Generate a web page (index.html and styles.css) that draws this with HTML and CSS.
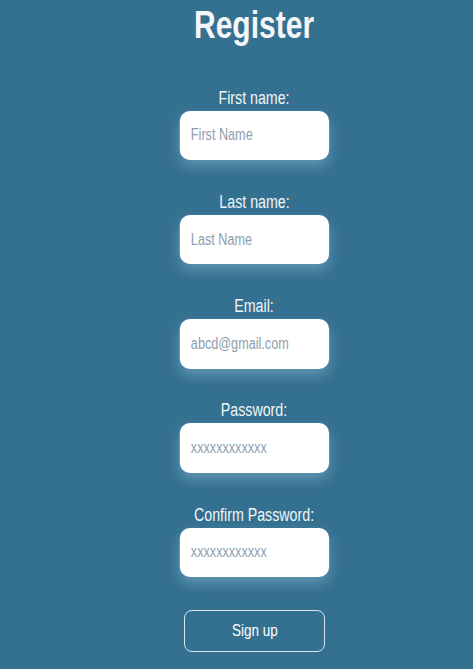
FILE: index.html
```html
<!DOCTYPE html>
<html lang="en">
<head>
<meta charset="utf-8">
<title>Register</title>
<link rel="stylesheet" href="styles.css">
</head>
<body>
<main class="page">
  <h1 class="title"><span class="narrow">Register</span></h1>
  <form class="form">
    <div class="field">
      <label class="label" for="fn"><span class="narrow">First name:</span></label>
      <input class="input" id="fn" type="text" placeholder="First Name">
    </div>
    <div class="field">
      <label class="label" for="ln"><span class="narrow">Last name:</span></label>
      <input class="input" id="ln" type="text" placeholder="Last Name">
    </div>
    <div class="field">
      <label class="label" for="em"><span class="narrow">Email:</span></label>
      <input class="input" id="em" type="email" placeholder="abcd@gmail.com">
    </div>
    <div class="field">
      <label class="label" for="pw"><span class="narrow">Password:</span></label>
      <input class="input" id="pw" type="password" placeholder="xxxxxxxxxxxx">
    </div>
    <div class="field">
      <label class="label" for="cpw"><span class="narrow">Confirm Password:</span></label>
      <input class="input" id="cpw" type="password" placeholder="xxxxxxxxxxxx">
    </div>
    <button class="btn" type="button"><span class="narrow">Sign up</span></button>
  </form>
</main>
</body>
</html>
```

FILE: styles.css
```css
html, body {
  margin: 0;
  padding: 0;
  background: #34708f;
}
body {
  font-family: "Liberation Sans", Arial, sans-serif;
  color: #ffffff;
  height: 669px;
  overflow: hidden;
}
.narrow {
  display: inline-block;
  transform: scaleX(0.79);
  white-space: nowrap;
}
.page {
  display: flex;
  flex-direction: column;
  align-items: center;
  padding: 3px 0 0 36px;
}
.title {
  margin: 0;
  font-size: 38px;
  line-height: 44px;
  font-weight: bold;
  color: #f4f6f8;
}
.form {
  display: flex;
  flex-direction: column;
  align-items: center;
  gap: 31.75px;
  margin-top: 40.5px;
}
.field {
  display: flex;
  flex-direction: column;
  align-items: center;
  gap: 3px;
}
.label {
  font-size: 18px;
  line-height: 20px;
  color: #f2f5f7;
}
.input {
  box-sizing: border-box;
  width: 188.6px;
  height: 49.5px;
  border: none;
  border-radius: 12.66px / 10px;
  background: #ffffff;
  padding: 0 14px;
  font-family: inherit;
  font-size: 16px;
  color: #333;
  box-shadow: 0 6px 16px rgba(170, 215, 245, 0.38);
  outline: none;
  transform: scaleX(0.79);
}
.input::placeholder {
  color: #8d9eae;
}
.btn {
  box-sizing: border-box;
  width: 141px;
  height: 42px;
  margin-top: 1px;
  background: transparent;
  border: 1px solid #d6e8f2;
  border-radius: 8px;
  color: #ffffff;
  font-family: inherit;
  font-size: 17px;
  cursor: pointer;
}
```
